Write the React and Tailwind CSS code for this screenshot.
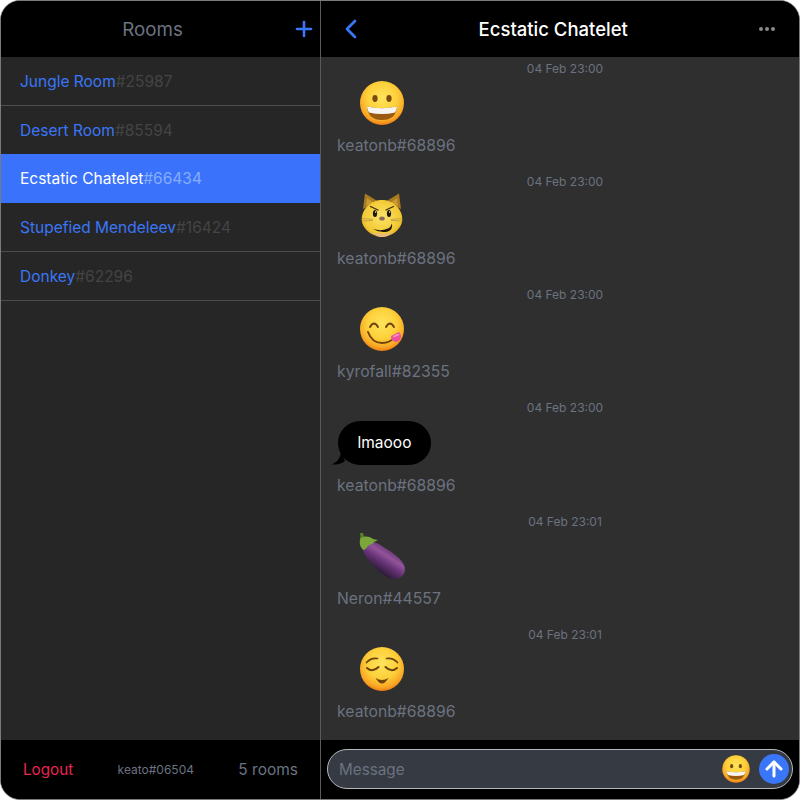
import { ArrowUp, ChevronLeft, Plus } from "lucide-react";

const rooms = [
    { name: "Jungle Room", id: "#25987" },
    { name: "Desert Room", id: "#85594", beforeActive: true },
    { name: "Ecstatic Chatelet", id: "#66434", active: true },
    { name: "Stupefied Mendeleev", id: "#16424" },
    { name: "Donkey", id: "#62296" },
];

function FaceDefs({ id }) {
    return (
        <defs>
            <radialGradient id={id} cx="50%" cy="38%" r="62%">
                <stop offset="0%" stopColor="#ffe45c" />
                <stop offset="55%" stopColor="#fdd03a" />
                <stop offset="85%" stopColor="#f9a825" />
                <stop offset="100%" stopColor="#ee7d13" />
            </radialGradient>
        </defs>
    );
}

function Grin({ className = "w-12 h-12", id = "grin" }) {
    return (
        <svg viewBox="0 0 48 48" className={className}>
            <FaceDefs id={id} />
            <circle cx="24" cy="24" r="22" fill={`url(#${id})`} />
            <ellipse cx="17" cy="19.5" rx="2.6" ry="3.4" fill="#7a4a0c" />
            <ellipse cx="31" cy="19.5" rx="2.6" ry="3.4" fill="#7a4a0c" />
            <path d="M9 27.5 Q24 31 39 27.5 Q38 41 24 41 Q10 41 9 27.5 Z" fill="#9a5a10" />
            <path d="M9 27.5 Q24 31 39 27.5 Q38.6 31.5 37 33.5 Q24 36.5 11 33.5 Q9.4 31.5 9 27.5 Z" fill="#f6f4f0" />
        </svg>
    );
}

function CatFace() {
    return (
        <svg viewBox="0 0 48 48" className="w-12 h-12">
            <defs>
                <radialGradient id="cat" cx="50%" cy="45%" r="60%">
                    <stop offset="0%" stopColor="#fbe468" />
                    <stop offset="75%" stopColor="#f2c933" />
                    <stop offset="100%" stopColor="#d9a521" />
                </radialGradient>
            </defs>
            <path d="M7 1.5 L21 10 L5 17 Z M41 1.5 L27 10 L43 17 Z" fill="#a97a1f" />
            <path d="M9 6 L16 11 L8 14 Z M39 6 L32 11 L40 14 Z" fill="#c79a36" />
            <path d="M24 8 C34 8 44 16 44.3 27 C44.5 37 33 45 24 45 C15 45 3.5 37 3.7 27 C4 16 14 8 24 8 Z" fill="url(#cat)" />
            <path d="M14 40 C20 42.5 28 42.5 34 40 C31 43.5 27 45 24 45 C21 45 17 43.5 14 40 Z" fill="#e9b98a" />
            <path d="M12.5 14.5 L20 18 M35.5 14.5 L28 18" stroke="#3d2a10" strokeWidth="1.3" strokeLinecap="round" />
            <ellipse cx="17" cy="21.5" rx="2.1" ry="3.5" fill="#20180e" />
            <ellipse cx="31" cy="21.5" rx="2.1" ry="3.5" fill="#20180e" />
            <circle cx="17.6" cy="20" r="0.7" fill="#fff" />
            <circle cx="31.6" cy="20" r="0.7" fill="#fff" />
            <path d="M4 26.5 L15 27.5 M4 29 L15 28.5 M44 26.5 L33 27.5 M44 29 L33 28.5" stroke="#c9a544" strokeWidth="1.2" />
            <ellipse cx="24" cy="26.5" rx="2.8" ry="2.1" fill="#8d6a5a" />
            <path d="M15 37 Q23 39.5 30 36.5 Q33 35 34 31.5 Q35 37.5 30 39.5 Q22 41.5 15 37 Z" fill="#20180e" />
        </svg>
    );
}

function Yum() {
    return (
        <svg viewBox="0 0 48 48" className="w-12 h-12">
            <FaceDefs id="yum" />
            <circle cx="24" cy="24" r="22" fill="url(#yum)" />
            <path d="M12 22 Q16 15 20 22 M28 22 Q32 15 36 22" fill="none" stroke="#6e420b" strokeWidth="1.9" strokeLinecap="round" />
            <path d="M10 27 Q14 38 24 38 Q32 38 37 32" fill="none" stroke="#6e420b" strokeWidth="1.9" strokeLinecap="round" />
            <path d="M33 31 L41 27 Q44 30 42.5 34 Q40 38 36 36.5 Q33 35 33 31 Z" fill="#ee4f9b" />
            <path d="M36 31.5 L40.5 29.5" stroke="#f99ac8" strokeWidth="1.6" strokeLinecap="round" />
        </svg>
    );
}

function Eggplant() {
    return (
        <svg viewBox="0 0 48 48" className="w-12 h-12">
            <defs>
                <linearGradient id="egg" x1="75%" y1="15%" x2="30%" y2="75%">
                    <stop offset="0%" stopColor="#4c2a60" />
                    <stop offset="38%" stopColor="#93549a" />
                    <stop offset="62%" stopColor="#683478" />
                    <stop offset="100%" stopColor="#2a1936" />
                </linearGradient>
            </defs>
            <path d="M6 12 C12 8 18 10 24 14 C32 19 42 25 46 33 C49 41 44 47 37 47 C30 47 22 41 16 34 C10 28 5 22 4 14 Z" fill="url(#egg)" />
            <path d="M3 3 L5 5 C9 4 13 5 15 7 L20 8 L16 10 C15 12 13 12 11 13 C9 15 8 17 6 18 C3 17 1 12 2 8 Z" fill="#7aa63a" />
            <path d="M2 1 L5 1 L6 5 L3 6 Z" fill="#5b8429" />
        </svg>
    );
}

function Relieved() {
    return (
        <svg viewBox="0 0 48 48" className="w-12 h-12">
            <FaceDefs id="relieved" />
            <circle cx="24" cy="24" r="22" fill="url(#relieved)" />
            <path d="M8.5 17.5 Q13 12.5 19.5 13.5 M39.5 17.5 Q35 12.5 28.5 13.5" fill="none" stroke="#6e420b" strokeWidth="1.7" strokeLinecap="round" />
            <path d="M9 23 Q14.5 28 20.5 22 M39 23 Q33.5 28 27.5 22" fill="none" stroke="#6e420b" strokeWidth="2" strokeLinecap="round" />
            <path d="M17.5 33 Q24 37 30.5 33 Q27 38.5 24 38.5 Q21 38.5 17.5 33 Z" fill="#6e420b" />
        </svg>
    );
}

function Stamp({ children }) {
    return (
        <div className="flex justify-center pl-[10px] h-4 text-xs leading-4 text-[#6b7280]">{children}</div>
    );
}

function UserName({ children }) {
    return <div className="pl-4 h-6 text-[15.75px] leading-6 text-[#6b7280]">{children}</div>;
}

function EmojiMessage({ time, user, children }) {
    return (
        <div className="pt-[4px] pb-[12px]">
            <Stamp>{time}</Stamp>
            <div className="pl-[37px] mt-[2px] mb-[7px]">{children}</div>
            <UserName>{user}</UserName>
        </div>
    );
}

export default function App() {
    return (
        <div className="w-[800px] h-[800px] bg-white font-['Inter',sans-serif]">
            <div className="flex w-full h-full rounded-[20px] border border-[#7a7a7a] overflow-hidden bg-black">
                {/* Rooms */}
                <div className="flex flex-col w-[320px] shrink-0 border-r border-[#5a5a5a]">
                    <div className="flex items-center h-[56px] shrink-0 bg-black pr-[4px]">
                        <div className="flex-1 pt-[2px] pl-[12px] text-center text-[18.75px] text-[#6b7280]">Rooms</div>
                        <Plus size={24} strokeWidth={2.6} className="text-[#3a76f8]" />
                    </div>
                    <div className="flex-1 bg-[#262626]">
                        {rooms.map((room) => (
                            <div
                                key={room.id}
                                className={`flex items-center pl-[19px] text-[15.5px] ${
                                    room.active
                                        ? "h-[49px] bg-[#3a72fb]"
                                        : room.beforeActive
                                            ? "h-[48px] pt-[2px]"
                                            : "h-[49px] pt-[2px] border-b border-[#4d4d4d]"
                                }`}
                            >
                                <span className={room.active ? "text-white" : "text-[#3a76f8]"}>{room.name}</span>
                                <span className={room.active ? "text-[#86aefc]" : "text-[#444444]"}>{room.id}</span>
                            </div>
                        ))}
                    </div>
                    <div className="flex items-center justify-between h-[59px] shrink-0 bg-black pt-[1px] pl-[22px] pr-[22px]">
                        <span className="text-[15.25px] text-[#e8264f]">Logout</span>
                        <span className="text-xs text-[#6b7280]">keato#06504</span>
                        <span className="text-[15.5px] text-[#6b7280]">5 rooms</span>
                    </div>
                </div>

                {/* Chat */}
                <div className="flex flex-col flex-1 min-w-0">
                    <div className="flex items-center h-[56px] shrink-0 bg-black pl-[14px] pr-[24px]">
                        <ChevronLeft size={32} strokeWidth={2} className="text-[#3a76f8]" />
                        <div className="flex-1 pt-[2px] pr-[19px] text-center text-[18.5px] font-medium text-white">Ecstatic Chatelet</div>
                        <div className="flex gap-[1.5px]">
                            <span className="w-[4.5px] h-[4.5px] rounded-full bg-[#8a8a8a]" />
                            <span className="w-[4.5px] h-[4.5px] rounded-full bg-[#8a8a8a]" />
                            <span className="w-[4.5px] h-[4.5px] rounded-full bg-[#8a8a8a]" />
                        </div>
                    </div>
                    <div className="flex-1 min-h-0 overflow-hidden bg-[#2f2f2f]">
                        <EmojiMessage time="04 Feb 23:00" user="keatonb#68896"><Grin /></EmojiMessage>
                        <EmojiMessage time="04 Feb 23:00" user="keatonb#68896"><CatFace /></EmojiMessage>
                        <EmojiMessage time="04 Feb 23:00" user="kyrofall#82355"><Yum /></EmojiMessage>
                        <div className="pt-[4px] pb-[12px]">
                            <Stamp>04 Feb 23:00</Stamp>
                            <div className="relative w-[93px] ml-[17px] mt-[5px] mb-[9px] h-11 rounded-[22px] bg-black text-center text-[15.5px] leading-[44px] text-white">
                                lmaooo
                                <svg viewBox="0 0 16 14" className="absolute -left-[7px] bottom-0 w-4 h-[14px]">
                                    <path d="M10 0 C10 6 6 12 0 13.5 C5 14 10 13 14 10 Z" fill="#000" />
                                </svg>
                            </div>
                            <UserName>keatonb#68896</UserName>
                        </div>
                        <EmojiMessage time="04 Feb 23:01" user="Neron#44557"><Eggplant /></EmojiMessage>
                        <EmojiMessage time="04 Feb 23:01" user="keatonb#68896"><Relieved /></EmojiMessage>
                    </div>
                    <div className="flex items-center h-[59px] shrink-0 bg-black pb-[2px] pl-[6px] pr-[6px]">
                        <div className="flex items-center w-full h-10 rounded-[20px] border border-[#b5b8bd] bg-[#363a42] pl-[11px] pr-[3px]">
                            <span className="flex-1 pt-[3px] text-[15.25px] text-[#6b7280]">Message</span>
                            <Grin className="w-[30px] h-[30px] mr-[8px]" id="grin-input" />
                            <div className="flex items-center justify-center w-[30px] h-[30px] rounded-full bg-[#3a76f8]">
                                <ArrowUp size={24} strokeWidth={3} className="text-white" />
                            </div>
                        </div>
                    </div>
                </div>
            </div>
        </div>
    );
}
